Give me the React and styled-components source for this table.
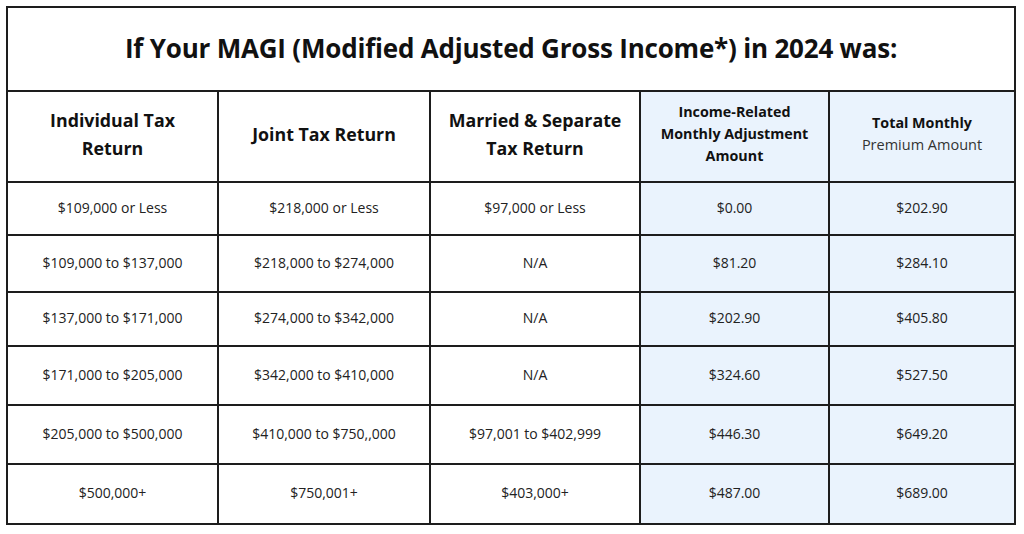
import React from "react";
import styled, { createGlobalStyle } from "styled-components";

const Global = createGlobalStyle`
  html, body { margin: 0; padding: 0; background: #fff; }
  body { font-family: "Open Sans", "Noto Sans", sans-serif; color: #1c1c1c; }
`;

const Page = styled.div`
  width: 1024px;
  height: 534px;
  padding: 6px 0 0 6px;
  box-sizing: border-box;
`;

const Table = styled.table`
  width: 1008px;
  border-collapse: collapse;
  table-layout: fixed;
  border: 2px solid #1d1d1d;
`;

const Row = styled.tr`
  height: ${(p) => p.$h}px;
`;

const TitleCell = styled.th`
  padding: 0 0 2px;
  border: 2px solid #1d1d1d;
  font-size: 26px;
  font-weight: 700;
  letter-spacing: -0.2px;
  color: #111;
  text-align: center;
`;

const HeadCell = styled.th`
  padding: 0 6px 5px;
  border: 2px solid #1d1d1d;
  background: ${(p) => (p.$shaded ? "#eaf3fd" : "#fff")};
  font-size: ${(p) => (p.$small ? "14.3px" : "17.8px")};
  line-height: ${(p) => (p.$small ? "22px" : "28px")};
  font-weight: 700;
  color: #111;
  text-align: center;
  vertical-align: middle;
`;

const Light = styled.span`
  display: block;
  font-weight: 400;
  font-size: 14.5px;
  color: #333;
`;

const Cell = styled.td`
  padding: 0 6px 3px;
  border: 2px solid #1d1d1d;
  background: ${(p) => (p.$shaded ? "#eaf3fd" : "#fff")};
  font-size: 14px;
  color: #222;
  text-align: center;
  vertical-align: middle;
`;

const rows = [
  { h: 53, c: ["$109,000 or Less", "$218,000 or Less", "$97,000 or Less", "$0.00", "$202.90"] },
  { h: 57, c: ["$109,000 to $137,000", "$218,000 to $274,000", "N/A", "$81.20", "$284.10"] },
  { h: 54, c: ["$137,000 to $171,000", "$274,000 to $342,000", "N/A", "$202.90", "$405.80"] },
  { h: 59, c: ["$171,000 to $205,000", "$342,000 to $410,000", "N/A", "$324.60", "$527.50"] },
  { h: 59, c: ["$205,000 to $500,000", "$410,000 to $750,,000", "$97,001 to $402,999", "$446.30", "$649.20"] },
  { h: 60, c: ["$500,000+", "$750,001+", "$403,000+", "$487.00", "$689.00"] },
];

export default function App() {
  return (
    <Page>
      <Global />
      <Table>
        <colgroup>
          <col style={{ width: 211 }} />
          <col style={{ width: 212 }} />
          <col style={{ width: 210 }} />
          <col style={{ width: 189 }} />
          <col style={{ width: 186 }} />
        </colgroup>
        <thead>
          <Row $h={84}>
            <TitleCell colSpan={5}>
              If Your MAGI (Modified Adjusted Gross Income*) in 2024 was:
            </TitleCell>
          </Row>
          <Row $h={91}>
            <HeadCell>Individual Tax<br />Return</HeadCell>
            <HeadCell>Joint Tax Return</HeadCell>
            <HeadCell>Married &amp; Separate<br />Tax Return</HeadCell>
            <HeadCell $shaded $small>
              Income-Related<br />Monthly Adjustment<br />Amount
            </HeadCell>
            <HeadCell $shaded $small>
              Total Monthly
              <Light>Premium Amount</Light>
            </HeadCell>
          </Row>
        </thead>
        <tbody>
          {rows.map((r, i) => (
            <Row key={i} $h={r.h}>
              {r.c.map((v, j) => (
                <Cell key={j} $shaded={j > 2}>
                  {v}
                </Cell>
              ))}
            </Row>
          ))}
        </tbody>
      </Table>
    </Page>
  );
}
